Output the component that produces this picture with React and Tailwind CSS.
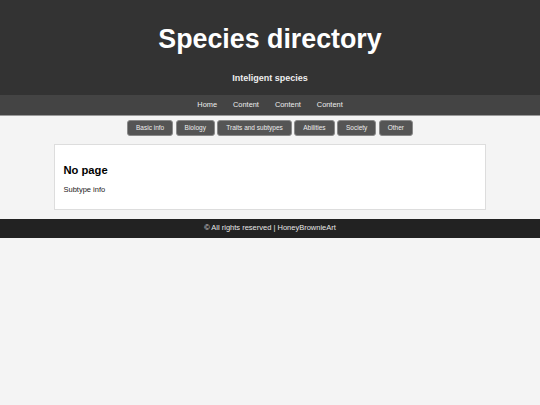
const tabs = ["Basic info", "Biology", "Traits and subtypes", "Abilities", "Society", "Other"];
const links = ["Home", "Content", "Content", "Content"];

export default function App() {
  return (
    <div className="min-h-screen bg-[#f4f4f4] font-['Liberation_Sans',Arial,sans-serif] text-[#222]">
      {/* header */}
      <header className="bg-[#333] pt-[24px] pb-[11.7px] text-center text-white">
        <h1 className="text-[26.8px] font-bold leading-[31px]">Species directory</h1>
        <h3 className="mt-[18px] text-[9px] font-bold leading-[10.3px] text-[#eee]">Inteligent species</h3>
      </header>

      {/* nav */}
      <nav className="flex h-[21px] items-center justify-center border-b border-[#9a9a9a] bg-[#444]">
        {links.map((l, i) => (
          <a key={i} className="px-[8px] text-[7.4px] leading-[9px] text-[#eee]">
            {l}
          </a>
        ))}
      </nav>

      {/* tabs */}
      <div className="mt-[4.5px] flex justify-center gap-[2.4px]">
        {tabs.map((t) => (
          <button
            key={t}
            className="flex h-[15.6px] items-center rounded-[3px] border border-[#8a8a8a] bg-[#555] px-[8px] text-[6.5px] leading-none text-[#eee]"
          >
            {t}
          </button>
        ))}
      </div>

      {/* content card */}
      <main className="mx-auto mt-[8px] w-[432px] border border-[#ddd] bg-white px-[8.5px] pt-[19px] pb-[14.4px]">
        <h2 className="mb-[9.5px] text-[11.2px] font-bold leading-[12.5px] text-black">No page</h2>
        <p className="text-[7.5px] leading-[8.6px] text-[#222]">Subtype info</p>
      </main>

      {/* footer */}
      <footer className="mt-[8.5px] flex h-[19px] items-center justify-center bg-[#222] text-[7.5px] text-[#e6e6e6]">
        © All rights reserved | HoneyBrownieArt
      </footer>
    </div>
  );
}
